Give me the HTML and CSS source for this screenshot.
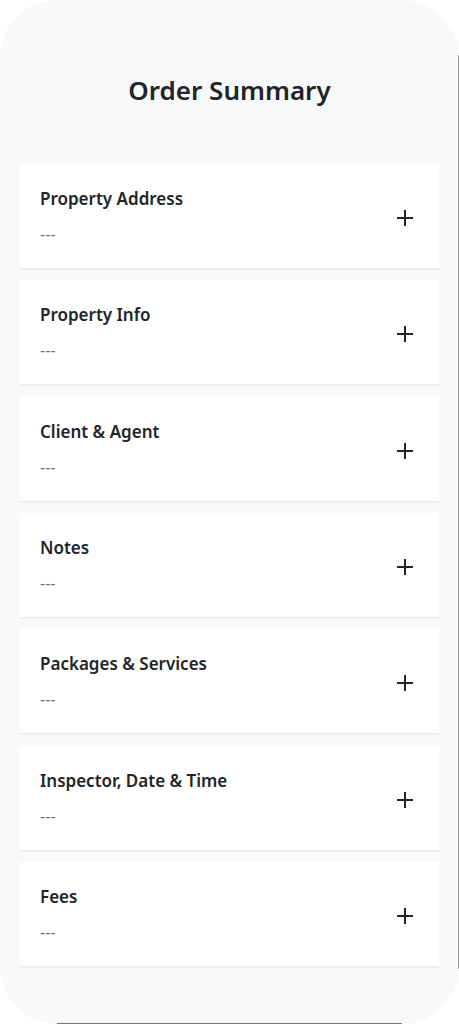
FILE: index.html
```html
<!DOCTYPE html>
<html>
<head>
<meta charset="utf-8">
<link rel="stylesheet" href="styles.css">
</head>
<body>
<div class="frame">
  <h1 class="title">Order Summary</h1>
  <div class="list">
    <div class="card"><div class="text"><div class="label">Property Address</div><div class="value">---</div></div><svg class="plus" viewBox="0 0 18 18"><path d="M9 1v16M1 9h16"/></svg></div>
    <div class="card"><div class="text"><div class="label">Property Info</div><div class="value">---</div></div><svg class="plus" viewBox="0 0 18 18"><path d="M9 1v16M1 9h16"/></svg></div>
    <div class="card"><div class="text"><div class="label">Client &amp; Agent</div><div class="value">---</div></div><svg class="plus" viewBox="0 0 18 18"><path d="M9 1v16M1 9h16"/></svg></div>
    <div class="card"><div class="text"><div class="label">Notes</div><div class="value">---</div></div><svg class="plus" viewBox="0 0 18 18"><path d="M9 1v16M1 9h16"/></svg></div>
    <div class="card"><div class="text"><div class="label">Packages &amp; Services</div><div class="value">---</div></div><svg class="plus" viewBox="0 0 18 18"><path d="M9 1v16M1 9h16"/></svg></div>
    <div class="card"><div class="text"><div class="label">Inspector, Date &amp; Time</div><div class="value">---</div></div><svg class="plus" viewBox="0 0 18 18"><path d="M9 1v16M1 9h16"/></svg></div>
    <div class="card"><div class="text"><div class="label">Fees</div><div class="value">---</div></div><svg class="plus" viewBox="0 0 18 18"><path d="M9 1v16M1 9h16"/></svg></div>
  </div>
</div>
</body>
</html>
```

FILE: styles.css
```css
html, body {
  margin: 0;
  padding: 0;
  background: #ffffff;
}
body {
  width: 459px;
  height: 1024px;
  overflow: hidden;
  font-family: "Noto Sans", "Open Sans", sans-serif;
}
.frame {
  position: relative;
  box-sizing: border-box;
  width: 459px;
  height: 1024px;
  background: #f8f9fb;
  border-radius: 57px;
  padding: 0 20px;
}
.frame::before {
  content: "";
  position: absolute;
  left: 57px;
  right: 57px;
  bottom: 0;
  height: 1px;
  background: #7a7a7a;
}
.frame::after {
  content: "";
  position: absolute;
  right: 0;
  top: 55px;
  bottom: 55px;
  width: 1px;
  background: #9a9a9a;
}
.title {
  margin: 0;
  padding: 70px 0 54px;
  text-align: center;
  font-size: 26px;
  font-weight: 600;
  line-height: 40px;
  color: #222426;
}
.list {
  display: flex;
  flex-direction: column;
  gap: 10.33px;
}
.card {
  display: flex;
  align-items: center;
  justify-content: space-between;
  box-sizing: border-box;
  height: 106px;
  background: #ffffff;
  border-bottom: 2px solid #eceef1;
  padding: 0 25px 0 20px;
}
.text {
  display: flex;
  flex-direction: column;
  gap: 13px;
  margin-top: -1px;
}
.label {
  font-size: 17px;
  font-weight: 600;
  line-height: 24px;
  color: #222426;
}
.value {
  font-size: 16px;
  line-height: 20px;
  color: #6f7276;
}
.plus {
  width: 18px;
  height: 18px;
  margin-top: 4px;
  fill: none;
  stroke: #222426;
  stroke-width: 2;
}
```
